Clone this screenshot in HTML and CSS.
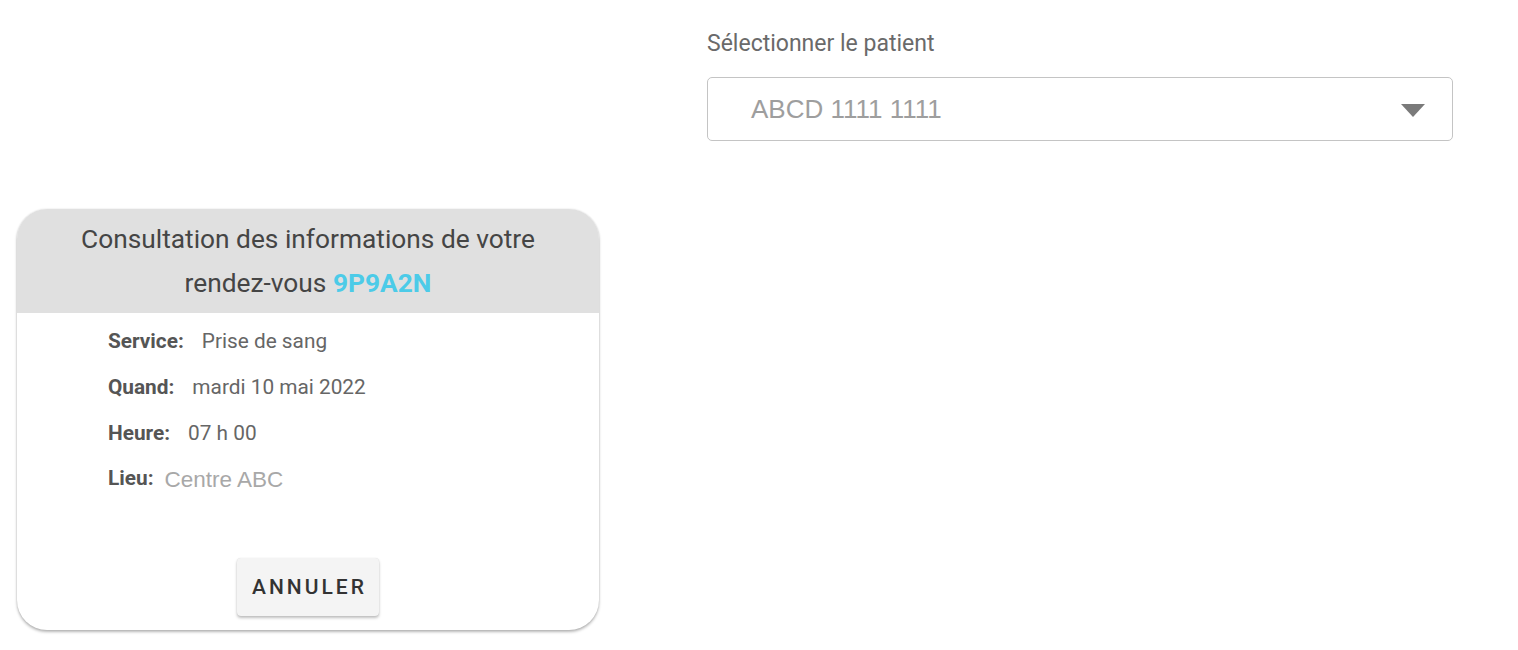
FILE: index.html
```html
<!DOCTYPE html>
<html lang="fr">
<head>
<meta charset="utf-8">
<title>Rendez-vous</title>
<link rel="stylesheet" href="styles.css">
</head>
<body>
<div class="page">
  <div class="top">
    <div class="field">
      <label class="field-label">Sélectionner le patient</label>
      <div class="select">
        <span class="select-value">ABCD 1111 1111</span>
        <svg class="caret" width="24" height="13" viewBox="0 0 24 13"><path d="M0 0 H24 L12 13 Z" fill="#7a7a7a"/></svg>
      </div>
    </div>
  </div>
  <div class="card">
    <div class="card-head">Consultation des informations de votre <span class="nowrap">rendez-vous</span> <span class="code">9P9A2N</span></div>
    <div class="card-body">
      <div class="row"><span class="key">Service:</span><span class="val">Prise de sang</span></div>
      <div class="row"><span class="key">Quand:</span><span class="val">mardi 10 mai 2022</span></div>
      <div class="row"><span class="key">Heure:</span><span class="val">07 h 00</span></div>
      <div class="row row-lieu"><span class="key">Lieu:</span><span class="val-alt">Centre ABC</span></div>
      <div class="actions"><button class="btn">ANNULER</button></div>
    </div>
  </div>
</div>
</body>
</html>
```

FILE: styles.css
```css
* { box-sizing: border-box; }
html, body { margin: 0; padding: 0; background: #fff; }
body { font-family: Roboto, "Liberation Sans", Arial, sans-serif; }
.page { width: 1518px; height: 650px; overflow: hidden; }
.top { display: flex; justify-content: flex-end; padding: 32px 65px 0 0; }
.field { width: 746px; display: flex; flex-direction: column; }
.field-label { font-size: 23px; line-height: 24px; color: #6a6a6a; margin-bottom: 21px; }
.select {
  height: 64px; border: 1px solid #c4c4c4; border-radius: 5px;
  display: flex; align-items: center; justify-content: space-between;
  padding: 0 27px 0 43px;
}
.select-value { font-family: "Liberation Sans", Arial, sans-serif; font-size: 26px; color: #9e9e9e; }
.caret { display: block; margin-top: 2px; }
.card {
  margin: 68px 0 0 17px; width: 582px; height: 421px;
  border-radius: 30px; overflow: hidden; background: #fff;
  box-shadow: 0 2px 3px rgba(0,0,0,0.28), 0 0 2px rgba(0,0,0,0.12);
  display: flex; flex-direction: column;
}
.card-head {
  background: #e0e0e0; height: 104px; padding: 8px 24px;
  text-align: center; font-size: 26.3px; line-height: 44px; color: #454545;
}
.nowrap { white-space: nowrap; }
.code { color: #4ccbe8; font-weight: 700; }
.card-body { flex: 1; padding: 5px 0 14px 91px; display: flex; flex-direction: column; }
.row { height: 46px; display: flex; align-items: center; font-size: 20.8px; }
.key { font-weight: 700; color: #555; margin-right: 18px; }
.val { color: #666; }
.row-lieu .key { margin-right: 11px; margin-top: -3px; }
.val-alt { font-family: "Liberation Sans", Arial, sans-serif; font-size: 22.5px; color: #a8a8a8; margin-top: 2px; }
.actions { margin-top: auto; display: flex; justify-content: center; padding-right: 91px; }
.btn {
  width: 142px; height: 58px; border: none; border-radius: 4px; background: #f4f4f4;
  font-family: Roboto, sans-serif; font-weight: 500; font-size: 21px; letter-spacing: 3px;
  color: #333; box-shadow: 0 2px 3px rgba(0,0,0,0.25), 0 0 1px rgba(0,0,0,0.15); padding: 0 0 0 3px;
}
```
